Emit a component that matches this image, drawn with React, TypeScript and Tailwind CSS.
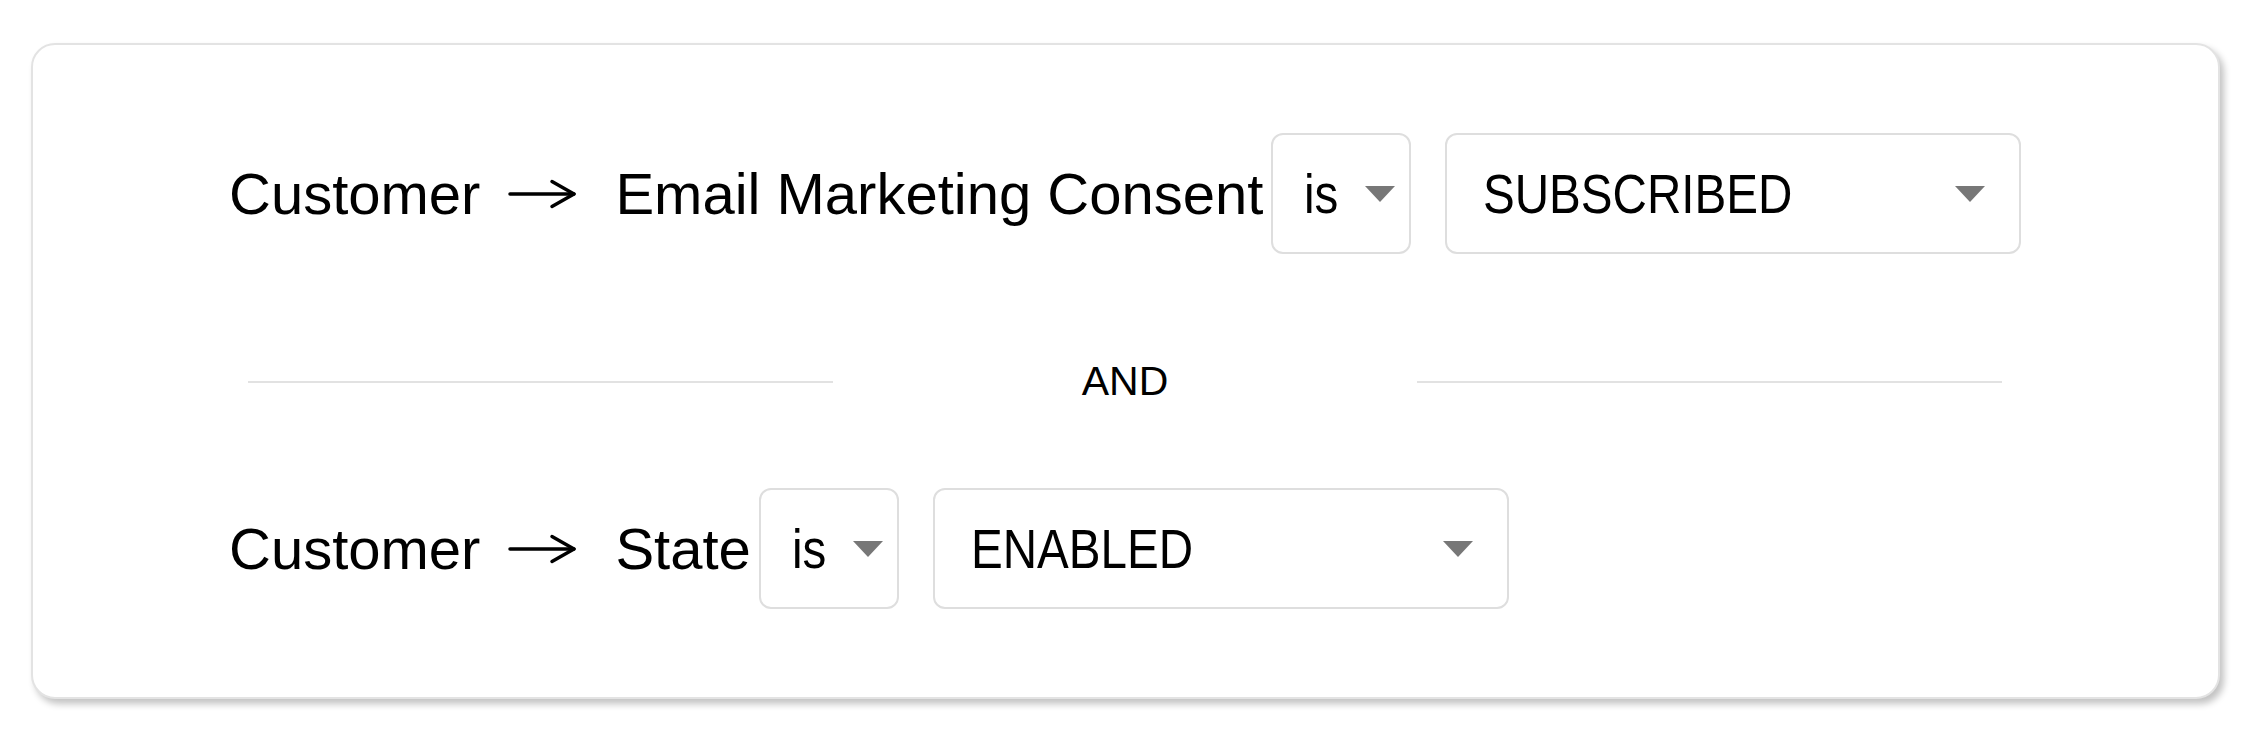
import React from 'react';

interface Condition {
    entity: string;
    field: string;
    operator: string;
    value: string;
}

const conditions: Condition[] = [
    { entity: 'Customer', field: 'Email Marketing Consent', operator: 'is', value: 'SUBSCRIBED' },
    { entity: 'Customer', field: 'State', operator: 'is', value: 'ENABLED' },
];

const labelFont = "font-['Liberation_Sans',Arial,sans-serif]";

function Arrow() {
    return (
        <svg width="70" height="30" viewBox="0 0 70 30" fill="none" className="ml-[27px] mr-[38px] shrink-0">
            <path d="M3 15H67" stroke="#000" strokeWidth="3.5" strokeLinecap="round" />
            <path d="M45 2.5L67 15L45 27.5" stroke="#000" strokeWidth="3.5" strokeLinecap="round" strokeLinejoin="round" />
        </svg>
    );
}

function Caret() {
    return (
        <svg width="30" height="16" viewBox="0 0 30 16" className="shrink-0">
            <path d="M0 0H30L15 16Z" fill="#777777" />
        </svg>
    );
}

function SelectBox({ value, wide }: { value: string; wide?: boolean }) {
    return (
        <div
            className={
                wide
                    ? 'flex items-center justify-between w-[576px] h-[121px] ml-[34px] pl-[36px] pr-[34px] rounded-[12px] border-2 border-[#dedede] bg-white shrink-0'
                    : 'flex items-center justify-between w-[140px] h-[121px] ml-[8px] pl-[31px] pr-[14px] rounded-[12px] border-2 border-[#dedede] bg-white shrink-0'
            }
        >
            {/* the select text is a narrow face: Arial metrics squeezed */}
            <span className={`${labelFont} inline-block origin-left scale-x-[0.85] text-[56px] leading-none text-black whitespace-nowrap`}>
                {value}
            </span>
            <Caret />
        </div>
    );
}

function ConditionRow({ condition, className }: { condition: Condition; className?: string }) {
    return (
        <div className={`flex items-center h-[121px] ${className ?? ''}`}>
            <span className={`${labelFont} text-[58px] leading-none text-black whitespace-nowrap`}>
                {condition.entity}
            </span>
            <Arrow />
            <span className={`${labelFont} text-[58px] leading-none text-black whitespace-nowrap`}>
                {condition.field}
            </span>
            <SelectBox value={condition.operator} />
            <SelectBox value={condition.value} wide />
        </div>
    );
}

function Divider({ label }: { label: string }) {
    return (
        <div className="grid grid-cols-3 items-center w-[1754px] h-[40px] ml-[19px] mt-[107px]">
            <div className="h-[2px] bg-[#e2e2e2]" />
            <div className={`${labelFont} text-center text-[41px] leading-none text-black`}>{label}</div>
            <div className="h-[2px] bg-[#e2e2e2]" />
        </div>
    );
}

export default function App() {
    return (
        <div className="min-h-screen bg-white pt-[43px] pl-[31px]">
            <div className="w-[2189px] h-[656px] rounded-[24px] border-2 border-[#e3e3e3] bg-white pl-[196px] pt-[88px] shadow-[4px_5px_7px_rgba(0,0,0,0.24)]">
                <ConditionRow condition={conditions[0]} />
                <Divider label="AND" />
                <ConditionRow condition={conditions[1]} className="mt-[87px]" />
            </div>
        </div>
    );
}
